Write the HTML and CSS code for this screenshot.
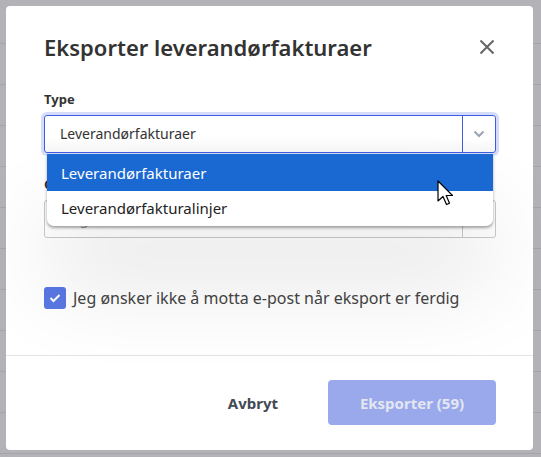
FILE: index.html
```html
<!DOCTYPE html>
<html lang="no">
<head>
  <meta charset="UTF-8">
  <meta name="viewport" content="width=device-width, initial-scale=1.0">
  <title>Eksporter leverandørfakturaer</title>
  <link rel="stylesheet" href="styles.css">
</head>
<body>
  <div class="backdrop">
    <div class="modal">
      <div class="modal-header">
        <h1>Eksporter leverandørfakturaer</h1>
        <button class="close" aria-label="Lukk">
          <svg width="16" height="16" viewBox="0 0 16 16"><path d="M1.5 1.5 L14.5 14.5 M14.5 1.5 L1.5 14.5" stroke="#666" stroke-width="2" fill="none"/></svg>
        </button>
      </div>

      <div class="modal-body">
        <div class="field">
          <label class="label">Type</label>
          <div class="select-wrap">
            <div class="select focused">
              <span class="select-value">Leverandørfakturaer</span>
              <span class="select-arrow">
                <svg width="12" height="8" viewBox="0 0 12 8"><path d="M1.5 1.5 L6 6 L10.5 1.5" stroke="#9aa3b5" stroke-width="2" fill="none"/></svg>
              </span>
            </div>
            <ul class="menu">
              <li class="option active">Leverandørfakturaer</li>
              <li class="option">Leverandørfakturalinjer</li>
            </ul>
            <svg class="cursor" width="20" height="28" viewBox="0 0 20 28"><path d="M1 1 L1 21 L6 16.5 L9.5 24.5 L12.5 23.2 L9.2 15.5 L15.5 15.5 Z" fill="#fff" stroke="#000" stroke-width="1.2" stroke-linejoin="round"/></svg>
          </div>
        </div>

        <div class="field">
          <label class="label">Gjelder</label>
          <div class="select">
            <span class="select-value placeholder">Velg leverandør</span>
            <span class="select-arrow"></span>
          </div>
        </div>

        <label class="check">
          <span class="box">
            <svg width="12" height="10" viewBox="0 0 12 10"><path d="M1.5 5 L4.5 8 L10.5 2" stroke="#fff" stroke-width="2" fill="none"/></svg>
          </span>
          <span>Jeg ønsker ikke å motta e-post når eksport er ferdig</span>
        </label>
      </div>

      <div class="modal-footer">
        <button class="btn btn-cancel">Avbryt</button>
        <button class="btn btn-primary" disabled>Eksporter (59)</button>
      </div>
    </div>
  </div>
</body>
</html>
```

FILE: styles.css
```css
/* Reset */
body, h1, ul, li {
  margin: 0;
  padding: 0;
}

* {
  box-sizing: border-box;
}

body {
  font-family: 'Noto Sans', 'Open Sans', sans-serif;
  color: #333;
  width: 541px;
  height: 457px;
  overflow: hidden;
}

/* Grey overlay with the table rows showing through */
.backdrop {
  height: 457px;
  padding: 6px 0 0 6px;
  background-color: #b2b2b7;
  background-image: repeating-linear-gradient(to bottom, transparent 0, transparent 40px, #a4a4aa 40px, #a4a4aa 41px);
  background-position: 0 3px;
}

.modal {
  width: 527px;
  height: 444px;
  background: #fff;
  border-radius: 4px;
  display: flex;
  flex-direction: column;
}

/* Header */
.modal-header {
  display: flex;
  justify-content: space-between;
  align-items: center;
  padding: 26px 37px 0 38px;
}

h1 {
  font-size: 22px;
  font-weight: 600;
  line-height: 30px;
  color: #333;
}

.close {
  background: none;
  border: none;
  padding: 0;
  margin-right: 1px;
  width: 16px;
  height: 16px;
  cursor: pointer;
}

/* Body */
.modal-body {
  padding: 28px 37px 0 38px;
  height: 294px;
  border-bottom: 1px solid #e4e4e6;
}

.field {
  margin-bottom: 22px;
}

.label {
  display: block;
  font-size: 13px;
  font-weight: 700;
  line-height: 18px;
  margin-bottom: 7px;
  color: #333;
}

.select-wrap {
  position: relative;
}

.select {
  display: flex;
  height: 38px;
  border: 1px solid #c9c9cc;
  border-radius: 3px;
  background: #fff;
}

.select.focused {
  border-color: #3d5ee0;
  box-shadow: 0 0 0 3px #d4dcfa;
  background: linear-gradient(to bottom, #fff 60%, #f6f6f6);
}

.select-value {
  flex: 1;
  padding-left: 15px;
  font-size: 14px;
  line-height: 36px;
  color: #333;
}

.select-value.placeholder {
  color: #999;
}

.select-arrow {
  width: 33px;
  border-left: 1px solid #c9c9cc;
  display: flex;
  align-items: center;
  justify-content: center;
}

.focused .select-arrow {
  border-left-color: #3d5ee0;
}

/* Open dropdown menu */
.menu {
  position: absolute;
  top: 39px;
  left: 3px;
  right: 3px;
  list-style: none;
  background: #fff;
  border-radius: 0 0 7px 7px;
  overflow: hidden;
  z-index: 2;
  box-shadow: 0 2px 3px rgba(0, 0, 0, 0.35), 0 60px 90px rgba(0, 0, 0, 0.1);
}

.option {
  height: 35px;
  padding-left: 14px;
  font-size: 15px;
  line-height: 35px;
  color: #222;
}

.option.active {
  height: 37px;
  line-height: 38px;
  background: #1a68d1;
  color: #fff;
}

.cursor {
  position: absolute;
  top: 65px;
  left: 393px;
  z-index: 3;
}

/* Checkbox */
.check {
  display: flex;
  align-items: center;
  gap: 7px;
  margin-top: 49px;
  font-size: 16px;
  color: #444;
}

.box {
  width: 22px;
  height: 22px;
  border-radius: 3px;
  background: #5a78e4;
  display: flex;
  align-items: center;
  justify-content: center;
}

/* Footer */
.modal-footer {
  display: flex;
  justify-content: flex-end;
  align-items: center;
  gap: 25px;
  padding: 24px 37px 0 0;
}

.btn {
  height: 45px;
  border: none;
  border-radius: 4px;
  font-family: inherit;
  font-size: 15px;
  font-weight: 700;
  cursor: pointer;
}

.btn-cancel {
  background: none;
  color: #444a55;
  padding: 0 25px;
}

.btn-primary {
  width: 168px;
  background: #99a9eb;
  color: #e4e6f1;
}
```
